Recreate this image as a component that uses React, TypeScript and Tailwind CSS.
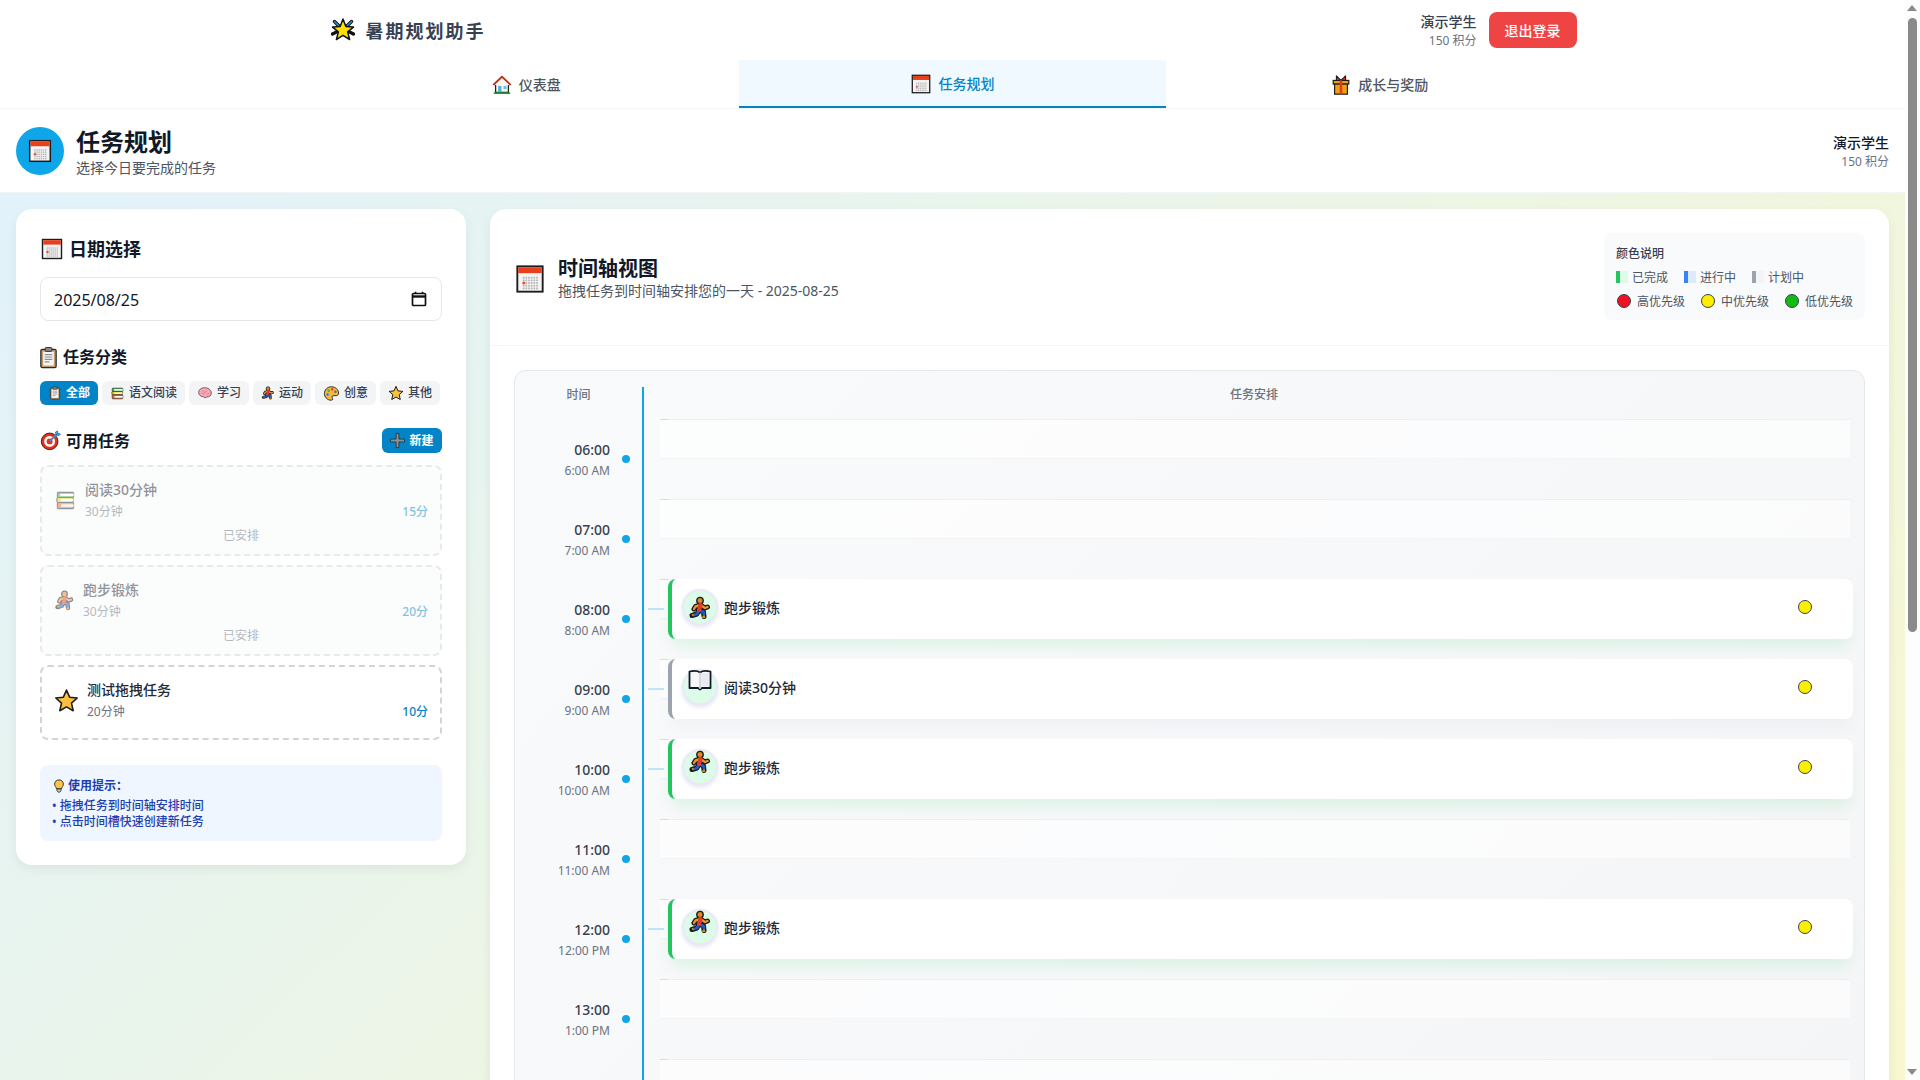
import React from "react";

type IconProps = { className?: string };

function CalendarIcon({ className }: IconProps) {
  const dots = [];
  for (let r = 0; r < 5; r++) {
    for (let c = 0; c < 6; c++) {
      dots.push(<rect key={`${r}-${c}`} x={6.6 + c * 2} y={10.4 + r * 2} width="1.3" height="1.3" fill="#b5b5b5" />);
    }
  }
  return (
    <svg viewBox="0 0 24 24" className={className}>
      <rect x="2.5" y="2.5" width="19" height="19" fill="#f4f4f4" stroke="#1c1c1c" strokeWidth="1.4" />
      <rect x="3.2" y="3.2" width="17.6" height="4.4" fill="#e8401c" />
      {dots}
      <circle cx="7.4" cy="15" r="1.2" fill="#e8553f" />
    </svg>
  );
}

function LogoStar({ className }: IconProps) {
  return (
    <svg viewBox="0 0 24 24" className={className}>
      <path d="M3.500 3.500l5 5M20.500 3.500l-5 5M1.500 16l5-2.500M22.500 16l-5-2.500" stroke="#111" strokeWidth="3.400" strokeLinecap="round" />
      <path d="M3.500 3.500l4 4M20.500 3.500l-4 4" stroke="#2b8fd0" strokeWidth="1.600" strokeLinecap="round" />
      <path d="M12 1l2.900 7.600 7.600.5-5.900 4.800 2 7.600-6.600-4.200-6.600 4.200 2-7.600L1.500 9.100l7.600-.5z" fill="#ffe000" stroke="#111" strokeWidth="1.500" strokeLinejoin="round" />
    </svg>
  );
}

function HouseIcon({ className }: IconProps) {
  return (
    <svg viewBox="0 0 24 24" className={className}>
      <path d="M5 11v9h14v-9" fill="#fff7ee" stroke="#222" strokeWidth="1.4" />
      <path d="M2.5 12L12 3l9.5 9" fill="#fff" stroke="#b8321f" strokeWidth="2" strokeLinejoin="round" />
      <path d="M5.6 11L12 5l6.4 6v1H5.6z" fill="#fff7ee" />
      <rect x="13.6" y="13" width="3.4" height="3.4" fill="#66c6ea" />
      <rect x="7.8" y="13" width="3.6" height="7" fill="#4fb0d8" />
      <rect x="3" y="20" width="18" height="1.8" fill="#1f9c3f" />
    </svg>
  );
}

function GiftIcon({ className }: IconProps) {
  return (
    <svg viewBox="0 0 24 24" className={className}>
      <path d="M7 2l5 5 5-5v6H7z" fill="#d9401f" stroke="#1c1c1c" strokeWidth="1.2" strokeLinejoin="round" />
      <rect x="3.5" y="7" width="17" height="4" fill="#f59e0b" stroke="#1c1c1c" strokeWidth="1.3" />
      <rect x="5" y="11" width="14" height="11" fill="#f59e0b" stroke="#1c1c1c" strokeWidth="1.3" />
      <rect x="10.6" y="7" width="2.8" height="15" fill="#d9401f" />
    </svg>
  );
}

function ClipboardIcon({ className }: IconProps) {
  return (
    <svg viewBox="0 0 24 24" className={className}>
      <rect x="4" y="3.5" width="16" height="19" rx="1.5" fill="#c49a6c" stroke="#2b2b2b" strokeWidth="1.3" />
      <rect x="6.4" y="6" width="11.2" height="14.4" fill="#f5f5f5" />
      <rect x="8.5" y="1.6" width="7" height="4" rx="1" fill="#8b8b8b" stroke="#2b2b2b" strokeWidth="1" />
      <path d="M8 9h8M8 11.5h8M8 14h8M8 16.5h5" stroke="#8f8f8f" strokeWidth="1.2" />
    </svg>
  );
}

function BooksIcon({ className }: IconProps) {
  return (
    <svg viewBox="0 0 24 24" className={className}>
      <rect x="3.5" y="3.5" width="17" height="5.4" rx="1.2" fill="#35b34a" stroke="#2b2b2b" strokeWidth="1.1" />
      <rect x="6.5" y="5" width="14" height="2.4" fill="#fff" />
      <rect x="3" y="8.9" width="17" height="5.2" rx="1.2" fill="#f0c419" stroke="#2b2b2b" strokeWidth="1.1" />
      <rect x="3.5" y="14.1" width="17" height="6.4" rx="1.2" fill="#ec6a2c" stroke="#2b2b2b" strokeWidth="1.1" />
      <rect x="7" y="10.4" width="13" height="2.2" fill="#fff" />
      <rect x="7.5" y="16" width="13" height="2.6" fill="#fff" />
    </svg>
  );
}

function BrainIcon({ className }: IconProps) {
  return (
    <svg viewBox="0 0 24 24" className={className}>
      <path d="M2.500 11c0-4.300 4.300-7 8.500-7 5.200 0 10.500 2.800 10.500 8 0 4.200-3.600 6.300-6.800 5.800-1.500 1.900-4.200 1.600-5.200-.3-3.200.6-7-2.300-7-6.500z" fill="#f5a9b4" stroke="#52343b" strokeWidth="1.1" />
      <path d="M8 8c1.500 1 1 3 3 3s2-2 4-1.500M7 13c2-.5 3 1 5 .5M15 13.500c1 0 2-.5 3-1.500" fill="none" stroke="#c9707f" strokeWidth="1" />
    </svg>
  );
}

function RunnerIcon({ className }: IconProps) {
  const limbs = "M12.500 8.500L11 14M12.500 9l-5 1.500L6 13M12.500 9l4.500 3 2.500-1M11 14l4.500 2 .5 4.500M11 14l-2 4-5 1.500";
  return (
    <svg viewBox="0 0 24 24" className={className}>
      <path d={limbs} fill="none" stroke="#1a1a1a" strokeWidth="5" strokeLinecap="round" strokeLinejoin="round" />
      <circle cx="12" cy="4.600" r="3.200" fill="#d98a2b" stroke="#1a1a1a" strokeWidth="1.400" />
      <path d="M12.500 9l-5 1.500L6 13M12.500 9l4.500 3 2.500-1" fill="none" stroke="#e39a32" strokeWidth="2.400" strokeLinecap="round" strokeLinejoin="round" />
      <path d="M11 14l4.500 2 .5 2.500M11 14l-2 4-3 1" fill="none" stroke="#1f5fc4" strokeWidth="2.800" strokeLinecap="round" strokeLinejoin="round" />
      <path d="M12.500 9L11 14" stroke="#e5392c" strokeWidth="4.200" strokeLinecap="round" />
      <path d="M16 19.500l.2 1.600h-2M5.500 18.500l-1.500 1" stroke="#e58a1f" strokeWidth="1.800" fill="none" />
    </svg>
  );
}

function PaletteIcon({ className }: IconProps) {
  return (
    <svg viewBox="0 0 24 24" className={className}>
      <path d="M12 2.500C6 2.500 2 7 2 12s4 9.500 9.500 9.500c2.500 0 2.500-2 1.500-3.500-1-1.800.5-3 2.500-3H19c2 0 3-1.500 3-3.500 0-5-4.500-9-10-9z" fill="#f5b93a" stroke="#222" strokeWidth="1.300" />
      <circle cx="8" cy="8" r="1.700" fill="#2fa84f" />
      <circle cx="13" cy="6" r="1.700" fill="#e5392c" />
      <circle cx="17.500" cy="9.500" r="1.700" fill="#2a6fdb" />
      <circle cx="6.500" cy="13.500" r="1.700" fill="#2a6fdb" />
    </svg>
  );
}

function StarIcon({ className }: IconProps) {
  return (
    <svg viewBox="0 0 24 24" className={className}>
      <path d="M12 2l3 6.800 7.300.8-5.500 4.900 1.600 7.300L12 18.100 5.600 21.800l1.600-7.300L1.700 9.600 9 8.800z" fill="#fbbf3c" stroke="#1c1c1c" strokeWidth="1.500" strokeLinejoin="round" />
    </svg>
  );
}

function TargetIcon({ className }: IconProps) {
  return (
    <svg viewBox="0 0 24 24" className={className}>
      <circle cx="11" cy="13" r="9.500" fill="#e0321f" stroke="#2b2b2b" strokeWidth="1.100" />
      <circle cx="11" cy="13" r="6.200" fill="#fff" />
      <circle cx="11" cy="13" r="3.400" fill="#e0321f" />
      <path d="M11 13l9-9" stroke="#2b8fe0" strokeWidth="2.200" />
      <path d="M17.500 2.500l1 3 3 1 2-2-3-.5-.5-3z" fill="#2bb0f0" stroke="#2b2b2b" strokeWidth=".6" />
    </svg>
  );
}

function PlusIcon({ className }: IconProps) {
  return (
    <svg viewBox="0 0 24 24" className={className}>
      <path d="M10 2h4v8h8v4h-8v8h-4v-8H2v-4h8z" fill="#8a9297" stroke="#26323a" strokeWidth="1.200" />
    </svg>
  );
}

function BulbIcon({ className }: IconProps) {
  return (
    <svg viewBox="0 0 24 24" className={className}>
      <path d="M12 1.500c-4.500 0-7.500 3.300-7.500 7.200 0 3.300 2.500 5 3.300 8.300h8.400c.8-3.300 3.300-5 3.300-8.300 0-3.900-3-7.200-7.500-7.200z" fill="#fbc54a" stroke="#26221a" strokeWidth="1.500" />
      <path d="M8.500 17h7v3l-2 2.500h-3l-2-2.500z" fill="#bfc4c9" stroke="#26221a" strokeWidth="1.300" />
    </svg>
  );
}

function BookIcon({ className }: IconProps) {
  return (
    <svg viewBox="0 0 24 24" className={className}>
      <path d="M1.500 3.500c4-1 8-1 10.500 1 2.500-2 6.500-2 10.500-1V20H14l-2 1.500L10 20H1.500z" fill="#f7f7f7" stroke="#111827" strokeWidth="1.800" strokeLinejoin="round" />
      <path d="M12 4.500V21" stroke="#c9ced6" strokeWidth="1.500" />
      <rect x="12.800" y="5" width="8.400" height="13.500" fill="#e9ecef" />
    </svg>
  );
}

const chips = [
  { label: "全部", icon: <ClipboardIcon className="h-[14px] w-[14px]" />, active: true },
  { label: "语文阅读", icon: <BooksIcon className="h-[15px] w-[15px]" /> },
  { label: "学习", icon: <BrainIcon className="h-4 w-4" /> },
  { label: "运动", icon: <RunnerIcon className="h-[14px] w-[14px]" /> },
  { label: "创意", icon: <PaletteIcon className="h-[17px] w-[17px]" /> },
  { label: "其他", icon: <StarIcon className="h-4 w-4" /> },
];

type ScheduledTask = { name: string; done: boolean; kind: "run" | "book"; top?: boolean };

const scheduled: Record<string, ScheduledTask> = {
  "08:00": { name: "跑步锻炼", done: true, kind: "run" },
  "09:00": { name: "阅读30分钟", done: false, kind: "book", top: true },
  "10:00": { name: "跑步锻炼", done: true, kind: "run", top: true },
  "12:00": { name: "跑步锻炼", done: true, kind: "run", top: true },
};

const hours = Array.from({ length: 17 }, (_, i) => i + 6);

function to12h(h: number) {
  if (h === 12) return "12:00 PM";
  return h > 12 ? `${h - 12}:00 PM` : `${h}:00 AM`;
}

function TaskCard({ task }: { task: ScheduledTask }) {
  return (
    <div
      className={`absolute top-0 left-6 right-[11px] h-[60px] pb-1 flex items-center rounded-lg bg-white border-l-4 pl-[10px] pr-[41px] ${
        task.done
          ? "border-[#22c55e] shadow-[0_10px_15px_-3px_rgba(34,197,94,0.12)]"
          : "border-[#9ca3af] shadow-[0_10px_15px_-3px_rgba(107,114,128,0.06)]"
      }`}
    >
      <div className="relative w-9 h-9 rounded-full bg-[#dcfce7] border-2 border-[#e8eaf6] shadow-[0_2px_4px_rgba(100,116,180,0.2)]">
        {task.kind === "run" ? (
          <RunnerIcon className={`absolute left-[4px] w-6 h-6 ${task.top ? "-top-[1px]" : "top-[5px]"}`} />
        ) : (
          <BookIcon className="absolute left-[4px] -top-[3px] w-6 h-6" />
        )}
      </div>
      <span className="ml-[6px] pt-[2px] text-sm font-medium text-[#1f2937]">{task.name}</span>
      <span className="ml-auto w-[14px] h-[14px] rounded-full bg-[#ffee00] border border-[#374151]" />
    </div>
  );
}

function TimelineRow({ hour }: { hour: number }) {
  const label = `${String(hour).padStart(2, "0")}:00`;
  const task = scheduled[label];
  return (
    <div className="flex h-20">
      <div className="w-[129px] shrink-0 border-r-2 border-[#0ea5e9] flex items-center justify-end gap-3 pr-[12px]">
        <div className="text-right pt-[1px]">
          <div className="text-sm font-medium text-[#374151]">{label}</div>
          <div className="mt-[3px] text-xs text-[#6b7280]">{to12h(hour)}</div>
        </div>
        <span className="w-2 h-2 rounded-full bg-[#0ea5e9] ring-2 ring-white" />
      </div>
      <div className="relative flex-1 pl-4 pr-[14px]">
        <div className="relative h-10 bg-white/60 border-t border-b border-t-[#e0f2fe] border-b-[#f3f4f6]">
          <div className="absolute -top-px left-0 w-2 h-px bg-[#bae6fd]" />
        </div>
        {task && (
          <>
            <div className="absolute left-1 top-[29px] w-4 h-[2px] bg-[#bae6fd]" />
            <TaskCard task={task} />
          </>
        )}
      </div>
    </div>
  );
}

function Sidebar() {
  return (
    <aside className="w-[450px] shrink-0 self-start bg-white rounded-2xl p-6 shadow-[0_4px_12px_rgba(0,0,0,0.06)]">
      <div className="flex items-center gap-[5px] h-7 mb-4">
        <CalendarIcon className="w-6 h-6 mt-[3px]" />
        <h2 className="text-lg leading-7 pt-[2px] h-7 font-bold text-[#111827]">日期选择</h2>
      </div>
      <div className="h-11 flex items-center justify-between rounded-lg border border-[#e5e7eb] pl-[13px] pr-[14px] mb-6 text-base text-[#111827]">
        <span className="pt-[2px]">2025/08/25</span>
        <svg viewBox="0 0 16 16" className="w-4 h-4" fill="none" stroke="#111" strokeWidth="1.700">
          <rect x="1.500" y="2.500" width="13" height="12" rx="1" />
          <path d="M1.500 5.500h13" strokeWidth="2.400" />
          <path d="M4.500 .8v2M11.500 .8v2" />
        </svg>
      </div>

      <div className="flex items-center gap-[3px] h-6 mb-3">
        <ClipboardIcon className="w-[23px] h-[23px] -ml-[3px]" />
        <h3 className="text-base font-bold text-[#111827]">任务分类</h3>
      </div>
      <div className="flex gap-1 mb-[23px]">
        {chips.map((c) => (
          <div
            key={c.label}
            className={`h-6 flex items-center gap-1 px-2 rounded-md text-xs ${
              c.active ? "bg-[#0284c7] text-white font-semibold" : "bg-[#f3f4f6] text-[#374151] font-medium"
            }`}
          >
            {c.icon}
            {c.label}
          </div>
        ))}
      </div>

      <div className="flex items-center justify-between h-[25px] mb-3">
        <div className="flex items-center gap-[5px]">
          <TargetIcon className="w-[21px] h-[21px]" />
          <h3 className="text-base font-bold text-[#111827]">可用任务</h3>
        </div>
        <button className="h-[25px] w-[60px] flex items-center justify-center gap-1 rounded-md bg-[#0284c7] text-white text-xs font-semibold">
          <PlusIcon className="w-[17px] h-[17px] -mx-px" />
          新建
        </button>
      </div>

      <div className="flex flex-col gap-[9px]">
        <div className="border-2 border-dashed border-[#d1d5db] rounded-lg pt-[13px] pb-[10px] px-3 opacity-50 bg-[#f9fafb]">
          <div className="flex items-center">
            <BooksIcon className="w-[23px] h-[23px]" />
            <div className="ml-2 flex-1">
              <div className="text-sm font-medium text-[#1f2937]">阅读30分钟</div>
              <div className="mt-[4px] flex justify-between text-xs text-[#6b7280]">
                <span>30分钟</span>
                <span className="font-medium text-[#0284c7]">15分</span>
              </div>
            </div>
          </div>
          <div className="mt-2 text-center text-xs text-[#6b7280]">已安排</div>
        </div>
        <div className="border-2 border-dashed border-[#d1d5db] rounded-lg pt-[13px] pb-[10px] px-3 opacity-50 bg-[#f9fafb]">
          <div className="flex items-center">
            <RunnerIcon className="w-[21px] h-[21px]" />
            <div className="ml-2 flex-1">
              <div className="text-sm font-medium text-[#1f2937]">跑步锻炼</div>
              <div className="mt-[4px] flex justify-between text-xs text-[#6b7280]">
                <span>30分钟</span>
                <span className="font-medium text-[#0284c7]">20分</span>
              </div>
            </div>
          </div>
          <div className="mt-2 text-center text-xs text-[#6b7280]">已安排</div>
        </div>
        <div className="border-2 border-dashed border-[#d1d5db] rounded-lg pt-[13px] pb-[18px] px-3 bg-white">
          <div className="flex items-center">
            <StarIcon className="w-[25px] h-[25px]" />
            <div className="ml-2 flex-1">
              <div className="text-sm font-medium text-[#1f2937]">测试拖拽任务</div>
              <div className="mt-[4px] flex justify-between text-xs text-[#6b7280]">
                <span>20分钟</span>
                <span className="font-medium text-[#0284c7]">10分</span>
              </div>
            </div>
          </div>
        </div>
      </div>

      <div className="mt-[25px] rounded-lg bg-[#eff6ff] pt-[13px] pb-[11px] px-3 text-xs text-[#1e40af] font-medium">
        <div className="flex items-center gap-[2px]">
          <BulbIcon className="w-[14px] h-4" />
          <span className="font-semibold">使用提示：</span>
        </div>
        <div className="mt-1">• 拖拽任务到时间轴安排时间</div>
        <div>• 点击时间槽快速创建新任务</div>
      </div>
    </aside>
  );
}

function Legend() {
  return (
    <div className="w-[261px] h-[87px] rounded-lg bg-[#f9fafb] pt-3 pl-3 text-xs text-[#4b5563]">
      <div className="h-4 pt-px font-medium text-[#374151] mb-2">颜色说明</div>
      <div className="flex items-center gap-4 h-4 mb-2">
        {[
          ["已完成", "bg-[#dcfce7] border-[#22c55e]"],
          ["进行中", "bg-[#dbeafe] border-[#3b82f6]"],
          ["计划中", "bg-[#f3f4f6] border-[#9ca3af]"],
        ].map(([label, cls]) => (
          <div key={label} className="flex items-center gap-1">
            <span className={`w-3 h-3 border-l-4 ${cls}`} />
            <span className="pt-[2px]">{label}</span>
          </div>
        ))}
      </div>
      <div className="flex items-center gap-4 h-4 pl-[1px]">
        {[
          ["高优先级", "bg-[#ee1122]"],
          ["中优先级", "bg-[#ffee00]"],
          ["低优先级", "bg-[#11bb11]"],
        ].map(([label, cls]) => (
          <div key={label} className="flex items-center gap-[6px]">
            <span className={`w-[14px] h-[14px] rounded-full border border-[#374151] ${cls}`} />
            <span className="pt-[2px]">{label}</span>
          </div>
        ))}
      </div>
    </div>
  );
}

// the browser's own scrollbar doesn't show in the screenshot, so it is drawn over the page
function PageScrollbar() {
  return (
    <div className="fixed top-0 right-0 bottom-0 w-[15px] bg-[#fdfdfd]">
      <div className="absolute top-[5px] left-[2px] w-0 h-0 border-x-[5px] border-x-transparent border-b-[6px] border-b-[#8a8a8a]" />
      <div className="absolute top-[18px] left-[3px] w-[9px] h-[614px] rounded-full bg-[#8a8a8a]" />
      <div className="absolute bottom-[5px] left-[2px] w-0 h-0 border-x-[5px] border-x-transparent border-t-[6px] border-t-[#8a8a8a]" />
    </div>
  );
}

export default function App() {
  return (
    <div className="w-[1905px] min-h-screen bg-[linear-gradient(to_bottom_right,#e0f2fe,#fef9c3)] [font-family:'Noto_Sans','Noto_Sans_CJK_SC',sans-serif]">
      <header className="bg-white">
        <div className="max-w-7xl mx-auto px-4 h-[60px] flex items-center justify-between">
          <div className="flex items-center gap-[11px] pl-[2px]">
            <LogoStar className="w-[24px] h-[24px]" />
            <span className="pt-[2px] text-lg font-semibold tracking-[2px] text-[#374151]">暑期规划助手</span>
          </div>
          <div className="flex items-center gap-3">
            <div className="text-right">
              <div className="text-sm font-medium text-[#374151]">演示学生</div>
              <div className="mt-px text-xs text-[#6b7280]">150 积分</div>
            </div>
            <button className="h-9 px-4 pt-px rounded-lg bg-[#ef4444] text-white text-sm font-medium">退出登录</button>
          </div>
        </div>
      </header>

      <nav className="bg-white border-b border-[#f3f4f6]">
        <div className="max-w-7xl mx-auto grid grid-cols-3 h-12">
          <div className="flex items-center justify-center gap-[6px] text-sm font-medium text-[#4b5563]">
            <HouseIcon className="w-[22px] h-[22px] mt-[2px]" />
            <span className="pt-[2px]">仪表盘</span>
          </div>
          <div className="flex items-center justify-center gap-[6px] text-sm font-medium text-[#0284c7] bg-[#f0f9ff] border-b-2 border-[#0284c7]">
            <CalendarIcon className="w-[22px] h-[22px] mt-[2px]" />
            <span className="pt-[2px]">任务规划</span>
          </div>
          <div className="flex items-center justify-center gap-[6px] text-sm font-medium text-[#4b5563]">
            <GiftIcon className="w-[22px] h-[22px] mt-[2px]" />
            <span className="pt-[2px]">成长与奖励</span>
          </div>
        </div>
      </nav>

      <section className="bg-white border-b border-[#f3f4f6] p-4 h-[84px] flex items-center justify-between">
        <div className="flex items-center gap-3">
          <div className="w-12 h-12 rounded-full bg-[#0ea5e9] flex items-center justify-center">
            <CalendarIcon className="w-[26px] h-[26px]" />
          </div>
          <div className="pt-[2px]">
            <h1 className="text-2xl font-bold text-[#111827]">任务规划</h1>
            <p className="text-sm text-[#4b5563]">选择今日要完成的任务</p>
          </div>
        </div>
        <div className="text-right pt-[2px]">
          <div className="text-sm font-medium text-[#111827]">演示学生</div>
          <div className="mt-px text-xs text-[#6b7280]">150 积分</div>
        </div>
      </section>

      <main className="flex items-start gap-6 p-4">
        <Sidebar />
        <div className="flex-1 bg-white rounded-2xl shadow-[0_4px_12px_rgba(0,0,0,0.06)]">
          <div className="pt-6 px-6 pb-[25px] flex items-center justify-between border-b border-[#f3f4f6]">
            <div className="flex items-center gap-3">
              <CalendarIcon className="w-8 h-8 mt-1" />
              <div>
                <h2 className="h-7 pt-[2px] text-xl font-bold text-[#111827]">时间轴视图</h2>
                <p className="text-sm text-[#4b5563]">拖拽任务到时间轴安排您的一天 - 2025-08-25</p>
              </div>
            </div>
            <Legend />
          </div>
          <div className="p-6">
            <div className="bg-[linear-gradient(to_bottom_right,#f9fafb,#f3f4f6)] border border-[#e5e7eb] rounded-xl pt-4">
              <div className="flex h-8 text-xs font-medium text-[#6b7280]">
                <div className="w-[129px] shrink-0 border-r-2 border-[#0ea5e9] text-center">时间</div>
                <div className="flex-1 text-center">任务安排</div>
              </div>
              {hours.map((h) => (
                <TimelineRow key={h} hour={h} />
              ))}
            </div>
          </div>
        </div>
      </main>
      <PageScrollbar />
    </div>
  );
}
